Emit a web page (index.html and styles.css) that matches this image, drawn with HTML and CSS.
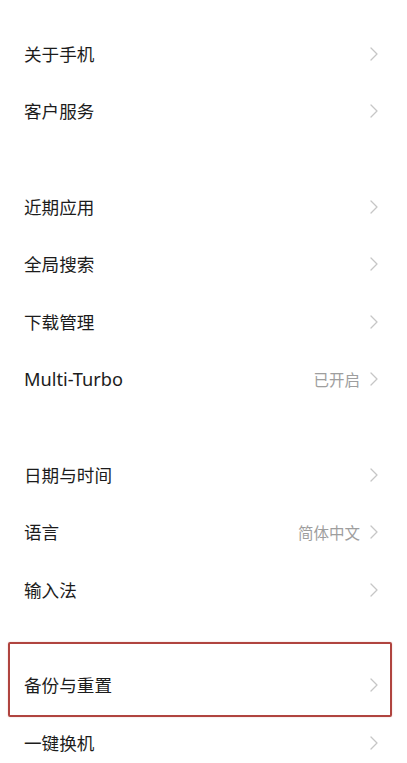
FILE: index.html
```html
<!DOCTYPE html>
<html lang="zh-CN">
<head>
<meta charset="utf-8">
<title>设置</title>
<link rel="stylesheet" href="styles.css">
</head>
<body>
<div class="page">
  <div class="group">
    <div class="row"><span class="label">关于手机</span><span class="chev"><svg viewBox="0 0 8 14" width="8" height="14"><path d="M1 1 L7 7 L1 13" /></svg></span></div>
    <div class="row"><span class="label">客户服务</span><span class="chev"><svg viewBox="0 0 8 14" width="8" height="14"><path d="M1 1 L7 7 L1 13" /></svg></span></div>
  </div>
  <div class="group">
    <div class="row"><span class="label">近期应用</span><span class="chev"><svg viewBox="0 0 8 14" width="8" height="14"><path d="M1 1 L7 7 L1 13" /></svg></span></div>
    <div class="row"><span class="label">全局搜索</span><span class="chev"><svg viewBox="0 0 8 14" width="8" height="14"><path d="M1 1 L7 7 L1 13" /></svg></span></div>
    <div class="row"><span class="label">下载管理</span><span class="chev"><svg viewBox="0 0 8 14" width="8" height="14"><path d="M1 1 L7 7 L1 13" /></svg></span></div>
    <div class="row"><span class="label latin">Multi-Turbo</span><span class="value">已开启</span><span class="chev"><svg viewBox="0 0 8 14" width="8" height="14"><path d="M1 1 L7 7 L1 13" /></svg></span></div>
  </div>
  <div class="group">
    <div class="row"><span class="label">日期与时间</span><span class="chev"><svg viewBox="0 0 8 14" width="8" height="14"><path d="M1 1 L7 7 L1 13" /></svg></span></div>
    <div class="row"><span class="label">语言</span><span class="value">简体中文</span><span class="chev"><svg viewBox="0 0 8 14" width="8" height="14"><path d="M1 1 L7 7 L1 13" /></svg></span></div>
    <div class="row"><span class="label">输入法</span><span class="chev"><svg viewBox="0 0 8 14" width="8" height="14"><path d="M1 1 L7 7 L1 13" /></svg></span></div>
  </div>
  <div class="group">
    <div class="row highlighted"><span class="label">备份与重置</span><span class="chev"><svg viewBox="0 0 8 14" width="8" height="14"><path d="M1 1 L7 7 L1 13" /></svg></span><span class="mark"></span></div>
    <div class="row"><span class="label">一键换机</span><span class="chev"><svg viewBox="0 0 8 14" width="8" height="14"><path d="M1 1 L7 7 L1 13" /></svg></span></div>
  </div>
</div>
</body>
</html>
```
FILE: styles.css
```css
html, body {
  margin: 0;
  padding: 0;
  background: #ffffff;
}
body {
  font-family: "Noto Sans CJK SC", "Noto Sans", sans-serif;
  color: #1a1a1a;
  overflow: hidden;
}
.page {
  padding-top: 25px;
}
.group {
  margin-bottom: 38px;
}
.group:last-child {
  margin-bottom: 0;
}
.row {
  position: relative;
  height: 57.5px;
  display: flex;
  align-items: center;
  padding: 0 29px 0 24px;
}
.label {
  flex: 1;
  font-size: 17.6px;
  line-height: 1;
  color: #1c1c1c;
}
.label.latin {
  font-family: "Noto Sans", "Noto Sans CJK SC", sans-serif;
  font-size: 18.2px;
}
.value {
  font-size: 15.5px;
  color: #9e9e9e;
  margin-right: 10px;
  line-height: 1;
}
.chev {
  display: flex;
  align-items: center;
}
.chev svg {
  display: block;
}
.chev path {
  fill: none;
  stroke: #c6c6c6;
  stroke-width: 1.3;
  stroke-linecap: round;
  stroke-linejoin: round;
}
.mark {
  position: absolute;
  left: 8px;
  right: 15px;
  top: -15px;
  bottom: -3px;
  border: 2px solid #b0443f;
  border-radius: 2px;
  box-shadow: 0 0 1.5px rgba(200, 90, 84, 0.45);
}
```
